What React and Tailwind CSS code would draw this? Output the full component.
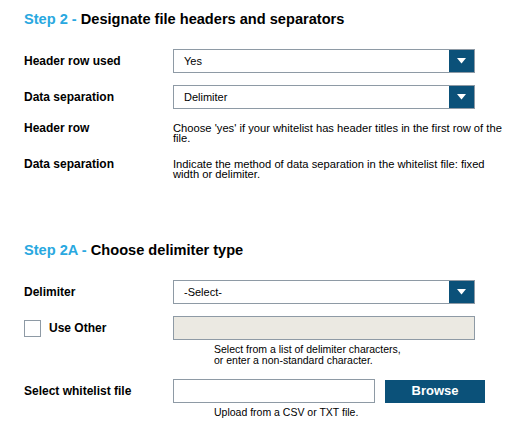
import React from 'react';

const font = { fontFamily: '"Liberation Sans", Arial, sans-serif' };

const Arrow = () => (
  <div className="w-[25px] h-full bg-[#0b5179] flex items-center justify-center">
    <svg width="9" height="6" viewBox="0 0 9 6">
      <polygon points="0,0 9,0 4.5,5.5" fill="#ffffff" />
    </svg>
  </div>
);

const Select = ({ value }) => (
  <div className="w-[302px] h-[24px] border border-[#8e9aa5] bg-white flex items-center">
    <div className="flex-1 pl-[10px] text-[11px] leading-[14px] text-black">{value}</div>
    <Arrow />
  </div>
);

const Label = ({ children }) => (
  <div className="w-[149px] text-[12px] leading-[14px] font-bold text-black">{children}</div>
);

const Title = ({ step, text }) => (
  <h2 className="text-[14.6px] leading-[20px] font-bold text-black">
    <span className="text-[#29a8e0]">{step} - </span>
    {text}
  </h2>
);

export default function App() {
  return (
    <div className="w-[510px] h-[424px] bg-white pl-[24px] pt-[9px]" style={font}>
      <Title step="Step 2" text="Designate file headers and separators" />

      <div className="mt-[20px] flex items-center">
        <Label>Header row used</Label>
        <Select value="Yes" />
      </div>
      <div className="mt-[12px] flex items-center">
        <Label>Data separation</Label>
        <Select value="Delimiter" />
      </div>

      <div className="mt-[12px] flex items-start">
        <Label>Header row</Label>
        <div className="w-[336px] pt-[2px] text-[11.2px] leading-[10px] text-black">
          Choose 'yes' if your whitelist has header titles in the first row of the file.
        </div>
      </div>
      <div className="mt-[14px] flex items-start">
        <Label>Data separation</Label>
        <div className="w-[318px] pt-[2px] text-[11.2px] leading-[10px] text-black">
          Indicate the method of data separation in the whitelist file: fixed width or delimiter.
        </div>
      </div>

      <div className="mt-[61px]">
        <Title step="Step 2A" text="Choose delimiter type" />
      </div>

      <div className="mt-[20px] flex items-center">
        <Label>Delimiter</Label>
        <Select value="-Select-" />
      </div>

      <div className="mt-[12px] flex items-center">
        <div className="w-[149px] flex items-center">
          <div className="w-[17px] h-[17px] border border-[#8e9aa5] bg-white" />
          <span className="ml-[8px] text-[12px] leading-[14px] font-bold text-black">Use Other</span>
        </div>
        <div className="w-[302px] h-[24px] border border-[#8e9aa5] bg-[#ebe9e2]" />
      </div>
      <div className="pl-[190px] mt-[4px] text-[10.5px] leading-[11px] text-black">
        Select from a list of delimiter characters,
        <br />
        or enter a non-standard character.
      </div>

      <div className="mt-[13px] flex items-center">
        <Label>Select whitelist file</Label>
        <div className="w-[202px] h-[24px] border border-[#8e9aa5] bg-white" />
        <button className="ml-[10px] w-[100px] h-[23px] bg-[#0b5179] text-white text-[13px] leading-[16px] font-bold">
          Browse
        </button>
      </div>
      <div className="pl-[190px] mt-[4px] text-[10.5px] leading-[11px] text-black">
        Upload from a CSV or TXT file.
      </div>
    </div>
  );
}
